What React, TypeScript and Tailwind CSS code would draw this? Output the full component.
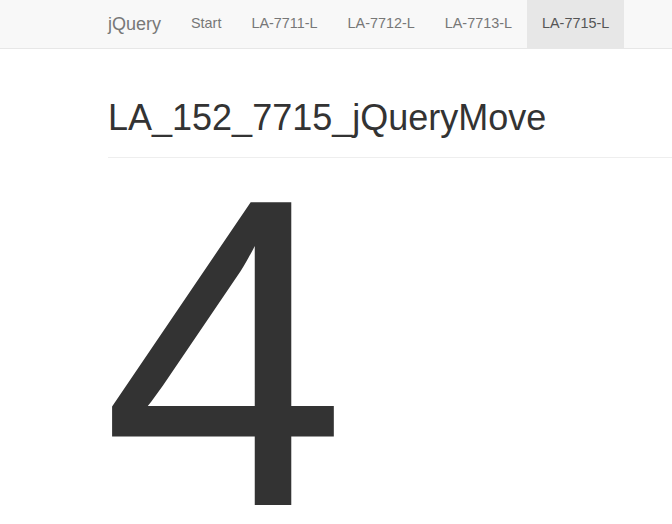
const links = ["Start", "LA-7711-L", "LA-7712-L", "LA-7713-L", "LA-7715-L"];

export default function App() {
  return (
    <div className="min-h-[524px] overflow-hidden bg-white font-['Liberation_Sans',Arial,sans-serif] text-[#333]">
      <nav className="h-[49px] border-b border-[#e7e7e7] bg-[#f8f8f8]">
        <div className="flex h-full pl-[93px]">
          <a className="flex items-center px-[15px] text-[18px] text-[#777]">jQuery</a>
          <ul className="flex">
            {links.map((l) => {
              const active = l === "LA-7715-L";
              return (
                <li key={l}>
                  <a
                    className={
                      active
                        ? "flex h-[48px] items-center bg-[#e7e7e7] px-[15px] text-[14.4px] text-[#555]"
                        : "flex h-[48px] items-center px-[15px] text-[14.4px] text-[#777]"
                    }
                  >
                    {l}
                  </a>
                </li>
              );
            })}
          </ul>
        </div>
      </nav>
      <main className="pl-[108px]">
        <div className="mt-[49px] border-b border-[#eee] pb-[19px]">
          <h1 className="text-[36px] leading-[40px]">LA_152_7715_jQueryMove</h1>
        </div>
        <div className="ml-[-6px] mt-[14px] text-[440px] leading-[361px]">4</div>
      </main>
    </div>
  );
}
